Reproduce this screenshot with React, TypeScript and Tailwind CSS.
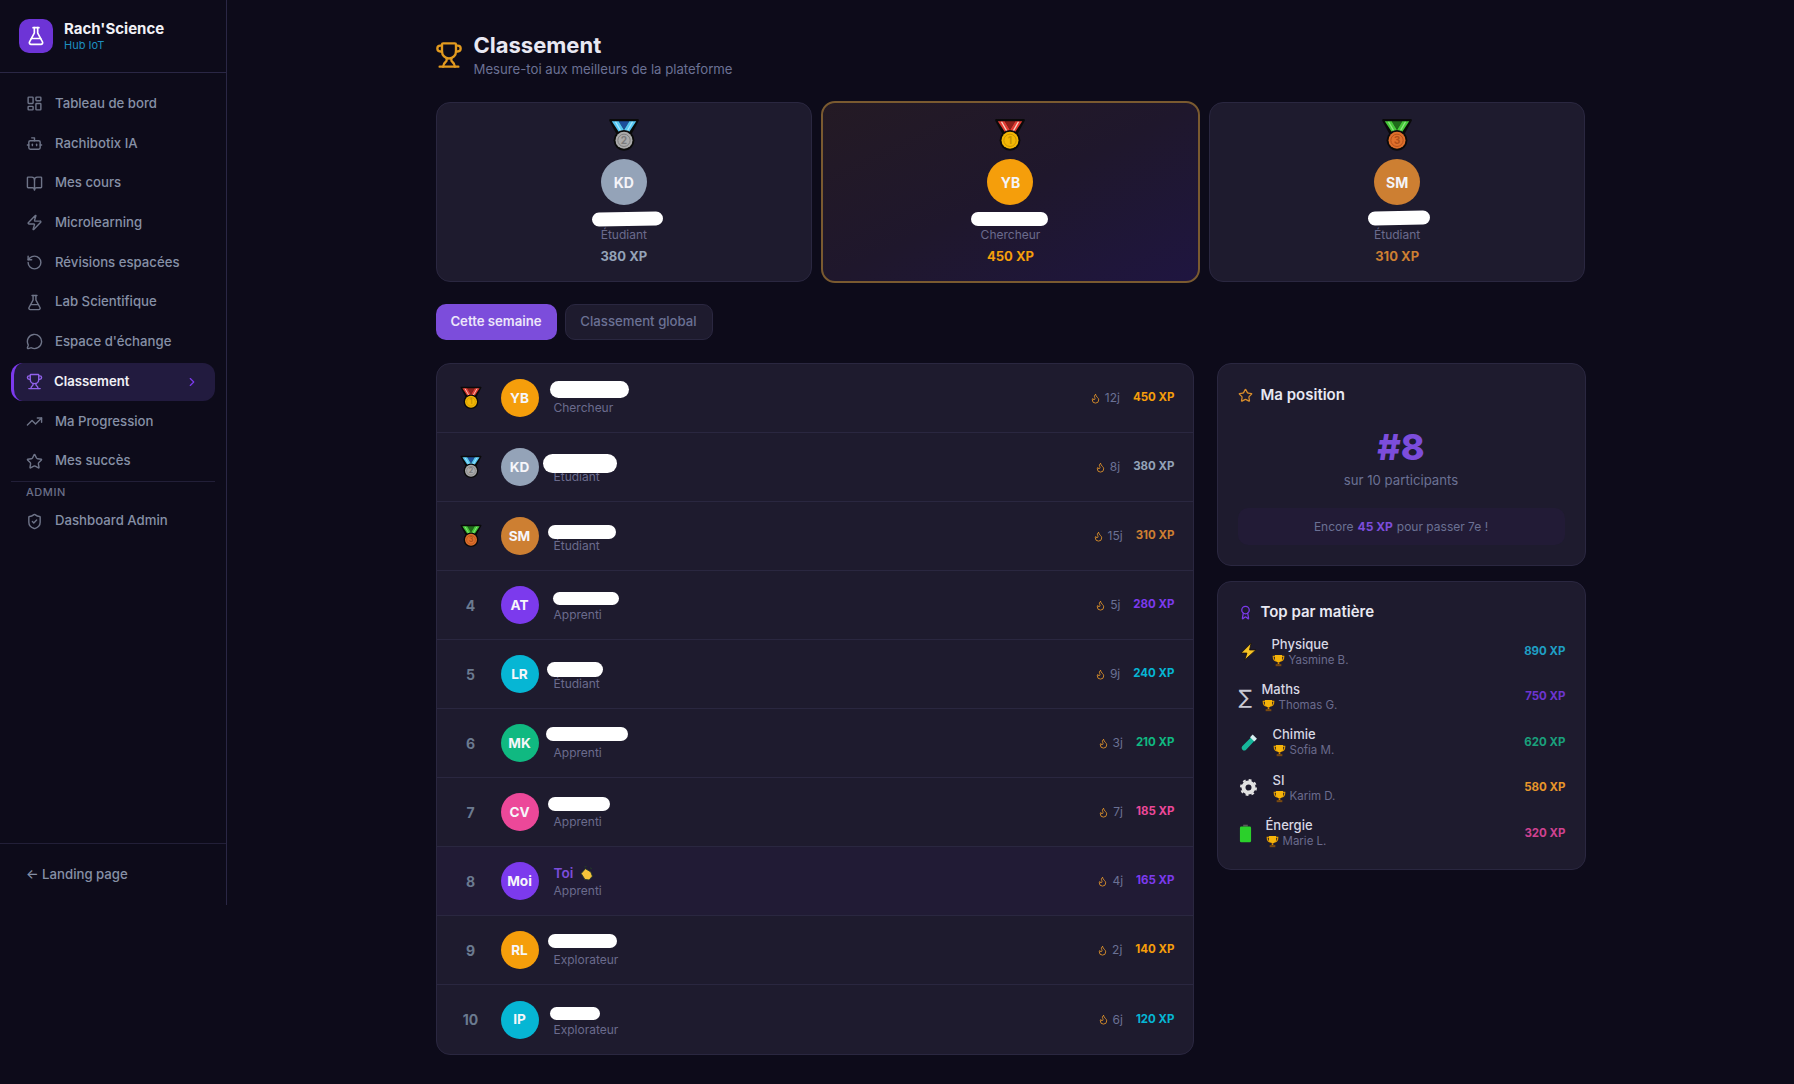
import {
  Award,
  BookOpen,
  Bot,
  ChevronRight,
  Flame,
  FlaskConical,
  LayoutDashboard,
  MessageCircle,
  RotateCcw,
  ShieldCheck,
  Star,
  TrendingUp,
  Trophy,
  Zap,
} from "lucide-react";

const navItems = [
  { label: "Tableau de bord", icon: LayoutDashboard },
  { label: "Rachibotix IA", icon: Bot },
  { label: "Mes cours", icon: BookOpen },
  { label: "Microlearning", icon: Zap },
  { label: "Révisions espacées", icon: RotateCcw },
  { label: "Lab Scientifique", icon: FlaskConical },
  { label: "Espace d'échange", icon: MessageCircle },
  { label: "Classement", icon: Trophy, active: true },
  { label: "Ma Progression", icon: TrendingUp },
  { label: "Mes succès", icon: Star },
];

// white marks hide the names in the reference
const rows = [
  { rank: 1, initials: "YB", role: "Chercheur", streak: "12j", xp: "450 XP", avatar: "bg-[#f59e0b]", color: "text-[#f59e0b]", mark: "left-[113px] top-[17px] w-[79px] h-[17px]" },
  { rank: 2, initials: "KD", role: "Étudiant", streak: "8j", xp: "380 XP", avatar: "bg-[#94a3b8]", color: "text-[#94a3b8]", mark: "left-[106px] top-[21px] w-[74px] h-[19px]" },
  { rank: 3, initials: "SM", role: "Étudiant", streak: "15j", xp: "310 XP", avatar: "bg-[#cd7f32]", color: "text-[#cd7f32]", mark: "left-[111px] top-[23px] w-[68px] h-[14px]" },
  { rank: 4, initials: "AT", role: "Apprenti", streak: "5j", xp: "280 XP", avatar: "bg-[#7c3aed]", color: "text-[#7c3aed]", mark: "left-[116px] top-[21px] w-[66px] h-[13px]" },
  { rank: 5, initials: "LR", role: "Étudiant", streak: "9j", xp: "240 XP", avatar: "bg-[#06b6d4]", color: "text-[#06b6d4]", mark: "left-[110px] top-[22px] w-[56px] h-[15px]" },
  { rank: 6, initials: "MK", role: "Apprenti", streak: "3j", xp: "210 XP", avatar: "bg-[#10b981]", color: "text-[#10b981]", mark: "left-[109px] top-[18px] w-[82px] h-[14px]" },
  { rank: 7, initials: "CV", role: "Apprenti", streak: "7j", xp: "185 XP", avatar: "bg-[#ec4899]", color: "text-[#ec4899]", mark: "left-[111px] top-[19px] w-[62px] h-[14px]" },
  { rank: 8, initials: "Moi", role: "Apprenti", streak: "4j", xp: "165 XP", avatar: "bg-[#7c3aed]", color: "text-[#7c3aed]", me: true },
  { rank: 9, initials: "RL", role: "Explorateur", streak: "2j", xp: "140 XP", avatar: "bg-[#f59e0b]", color: "text-[#f59e0b]", mark: "left-[111px] top-[18px] w-[69px] h-[14px]" },
  { rank: 10, initials: "IP", role: "Explorateur", streak: "6j", xp: "120 XP", avatar: "bg-[#06b6d4]", color: "text-[#06b6d4]", mark: "left-[113px] top-[22px] w-[50px] h-[13px]" },
];

const subjects = [
  { name: "Physique", who: "Yasmine B.", xp: "890 XP", color: "text-[#1f9fc4]", icon: "bolt", gap: "w-[34px]" },
  { name: "Maths", who: "Thomas G.", xp: "750 XP", color: "text-[#6d35d0]", icon: "sigma", gap: "w-[24px]" },
  { name: "Chimie", who: "Sofia M.", xp: "620 XP", color: "text-[#1aa07c]", icon: "tube", gap: "w-[35px]" },
  { name: "SI", who: "Karim D.", xp: "580 XP", color: "text-[#e8962a]", icon: "gear", gap: "w-[35px]" },
  { name: "Énergie", who: "Marie L.", xp: "320 XP", color: "text-[#cf4290]", icon: "battery", gap: "w-[28px]" },
];

function Medal({ rank, className }: { rank: number; className: string }) {
  const ribbon = rank === 1 ? "#e23b33" : rank === 2 ? "#56c7f2" : "#46c93a";
  const stripe = rank === 1 ? "#f6d3c4" : rank === 2 ? "#a6e6fb" : "#8ce67f";
  const inner = rank === 1 ? "#8c1f1a" : rank === 2 ? "#1c4f9c" : "#1f6b1a";
  const disc = rank === 1 ? "#f2b705" : rank === 2 ? "#ababab" : "#e0702c";
  const mark = rank === 1 ? "#c99400" : rank === 2 ? "#7c7c7c" : "#b0501a";
  return (
    <svg viewBox="0 0 32 32" className={className}>
      <path d="M3 2h26l-8 15H11z" fill="#0a0a0a" stroke="#0a0a0a" strokeWidth="2" strokeLinejoin="round" />
      <path d="M11 3h10l-5 8z" fill={inner} />
      <path d="M4.500 3H11l6 10-4 3z" fill={ribbon} />
      <path d="M27.500 3H21l-6 10 4 3z" fill={ribbon} />
      <path d="M8 3.500 14 14M24 3.500 18 14" stroke={stripe} strokeWidth="1.200" />
      <circle cx="16" cy="21" r="9.800" fill="#0a0a0a" />
      <circle cx="16" cy="21" r="8" fill={disc} />
      <circle cx="16" cy="21" r="5.800" fill="none" stroke={mark} strokeWidth="0.900" />
      <text x="16" y="24.400" textAnchor="middle" fontSize="9.500" fontWeight="700" fill={mark} fontFamily="Inter, sans-serif">
        {rank}
      </text>
    </svg>
  );
}

function CupEmoji() {
  return (
    <svg viewBox="0 0 16 16" className="w-[13px] h-[13px] shrink-0">
      <path d="M3.500 3H1.500c0 3 1 5 3.500 5.500M12.500 3h2c0 3-1 5-3.500 5.500" fill="none" stroke="#e09a00" strokeWidth="1.400" />
      <path d="M3.500 1.200h9v4.500c0 2.600-1.800 4.300-4.500 4.300S3.500 8.300 3.500 5.700z" fill="#f5b30a" />
      <path d="M7 10h2v2.500H7z" fill="#d68b00" />
      <path d="M4.500 12.500h7V15h-7z" fill="#7a4a10" />
    </svg>
  );
}

function SubjectIcon({ icon }: { icon: string }) {
  if (icon === "sigma") {
    return <span className="text-[20px] leading-none text-[#c9c9d4] font-['DejaVu_Sans',sans-serif]">∑</span>;
  }
  if (icon === "bolt") {
    return (
      <svg viewBox="0 0 18 18" className="w-[19px] h-[19px]">
        <path d="M11.500 1 2 10.500h5.500L5.500 17 16 7.500h-6z" fill="#f7c325" stroke="#1a1208" strokeWidth="0.800" strokeLinejoin="round" />
      </svg>
    );
  }
  if (icon === "tube") {
    return (
      <svg viewBox="0 0 18 18" className="w-[19px] h-[19px]">
        <path d="M13 2.500 3 12.500a2.500 2.500 0 0 0 3.500 3.500L16 6z" fill="#17b59a" />
        <path d="M13 1.500 17 5.500 14.500 8 10.500 4z" fill="#d7eef0" />
      </svg>
    );
  }
  if (icon === "gear") {
    return (
      <svg viewBox="0 0 18 18" className="w-[17px] h-[17px] ml-[1px]">
        <circle cx="9" cy="9" r="5.300" fill="none" stroke="#e2e2e2" strokeWidth="4.200" />
        <circle cx="9" cy="9" r="8" fill="none" stroke="#e2e2e2" strokeWidth="2" strokeDasharray="3 3.280" />
      </svg>
    );
  }
  return (
    <svg viewBox="0 0 14 20" className="w-[13px] h-[19px]">
      <path d="M4.500 0.500h5v2h-5z" fill="#5a5a5a" />
      <rect x="1" y="2.500" width="12" height="17" rx="1.500" fill="#2bd02b" />
    </svg>
  );
}

function Podium({
  rank,
  initials,
  role,
  xp,
  avatar,
  color,
  mark,
  top,
}: {
  rank: number;
  initials: string;
  role: string;
  xp: string;
  avatar: string;
  color: string;
  mark: string;
  top?: boolean;
}) {
  return (
    <div
      className={
        top
          ? "relative flex flex-col items-center h-[182px] -m-[1px] pt-[15px] rounded-[14px] border-2 border-[#7a5a30] bg-linear-to-br from-[#241a24] via-[#1f172c] to-[#1f1540]"
          : "relative flex flex-col items-center h-[180px] pt-[15px] rounded-[14px] border border-[#2a2740] bg-[#1e1b2e]"
      }
    >
      <Medal rank={rank} className="w-[34px] h-[34px]" />
      <div className={`mt-[7px] w-[46px] h-[46px] rounded-full flex items-center justify-center text-[14px] font-bold text-[#f4f4f8] ${avatar}`}>
        {initials}
      </div>
      <div className="h-[21px]" />
      <div className="text-[12px] leading-[18px] text-[#6b6b8d]">{role}</div>
      <div className={`mt-[2px] text-[13px] leading-[20px] font-bold ${color}`}>{xp}</div>
      <div className={`absolute bg-white rounded-full ${mark}`} />
    </div>
  );
}

export default function App() {
  return (
    <div className="min-h-[1084px] flex items-start bg-[#0d0b1a] font-['Inter',sans-serif]">
      {/* Sidebar */}
      <aside className="w-[227px] h-[905px] shrink-0 flex flex-col border-r border-[#2a2745]">
        <div className="h-[73px] flex items-center gap-[11px] pl-[19px] border-b border-[#2a2745]">
          <div className="w-[34px] h-[34px] rounded-[10px] bg-[#6d34d6] flex items-center justify-center">
            <FlaskConical className="w-[20px] h-[20px] text-white" strokeWidth={2} />
          </div>
          <div>
            <div className="text-[15px] leading-[18px] font-bold text-[#f1f1f6]">Rach'Science</div>
            <div className="text-[11px] leading-[14px] text-[#1d8fc0]">Hub IoT</div>
          </div>
        </div>

        <nav className="flex-1 pt-[12px] px-[11px]">
          <div className="flex flex-col gap-[2px]">
            {navItems.map((item) => {
              const Icon = item.icon;
              return item.active ? (
                <div
                  key={item.label}
                  className="h-[38px] flex items-center gap-[11px] pl-[12px] pr-[16px] rounded-[12px] border-l-[3px] border-[#7c3aed] bg-[#221b3f] text-[13.2px] font-semibold text-[#f1f1f6]"
                >
                  <Icon className="w-[17px] h-[17px] text-[#9061ea]" />
                  <span className="flex-1">{item.label}</span>
                  <ChevronRight className="w-[14px] h-[14px] text-[#7c3aed]" />
                </div>
              ) : (
                <div key={item.label} className="h-[37.7px] flex items-center gap-[12px] pl-[15px] text-[13.2px] font-medium text-[#8690a6]">
                  <Icon className="w-[17px] h-[17px] text-[#6e7488]" />
                  <span>{item.label}</span>
                </div>
              );
            })}
          </div>
          <div className="mt-[1px] border-t border-[#221f38] pl-[15px] pt-[3px] text-[11px] leading-[15px] font-medium tracking-[0.05em] text-[#6b6f88]">
            ADMIN
          </div>
          <div className="mt-[2px] h-[37.7px] flex items-center gap-[12px] pl-[15px] text-[13.2px] font-medium text-[#8690a6]">
            <ShieldCheck className="w-[17px] h-[17px] text-[#6e7488]" />
            <span>Dashboard Admin</span>
          </div>
        </nav>

        <div className="h-[62px] flex items-center pl-[26px] border-t border-[#221f38] text-[13.2px] font-medium text-[#8690a6]">
          ← Landing page
        </div>
      </aside>

      {/* Main */}
      <main className="flex-1 pt-[31px] pb-[30px]">
        <div className="w-[1150px] mx-auto">
          <div className="flex items-center gap-[11px] h-[48px] mb-[23px]">
            <Trophy className="w-[28px] h-[28px] -ml-[1px] text-[#e29a1f]" />
            <div>
              <h1 className="text-[22px] leading-[28px] font-bold text-[#e8e8f2]">Classement</h1>
              <p className="text-[13.2px] leading-[20px] text-[#6b7194]">Mesure-toi aux meilleurs de la plateforme</p>
            </div>
          </div>

          <div className="grid grid-cols-3 gap-[10px]">
            <Podium rank={2} initials="KD" role="Étudiant" xp="380 XP" avatar="bg-[#94a3b8]" color="text-[#94a3b8]" mark="left-[155px] top-[109px] w-[71px] h-[14px] -rotate-1" />
            <Podium rank={1} initials="YB" role="Chercheur" xp="450 XP" avatar="bg-[#f59e0b]" color="text-[#f59e0b]" mark="left-[148px] top-[109px] w-[77px] h-[14px]" top />
            <Podium rank={3} initials="SM" role="Étudiant" xp="310 XP" avatar="bg-[#cd7f32]" color="text-[#cd7f32]" mark="left-[158px] top-[108px] w-[62px] h-[14px] -rotate-1" />
          </div>

          <div className="flex gap-[8px] mt-[22px] mb-[23px]">
            <div className="h-[36px] w-[121px] flex items-center justify-center rounded-[10px] bg-[#7c4ddb] text-[13.2px] font-semibold text-[#ece6fa]">
              Cette semaine
            </div>
            <div className="h-[36px] w-[148px] flex items-center justify-center rounded-[10px] border border-[#2a2740] bg-[#1e1b2e] text-[13.2px] font-medium text-[#6b7194]">
              Classement global
            </div>
          </div>

          <div className="grid grid-cols-[758px_369px] gap-[23px] items-start">
            <div className="rounded-[14px] border border-[#2a2740] bg-[#1e1b2e] overflow-hidden">
              {rows.map((row) => (
                <div
                  key={row.rank}
                  className={`relative h-[69px] flex items-center pl-[20px] pr-[18px] border-b border-[#2a2740] last:border-b-0 ${row.me ? "bg-[#211b35]" : ""}`}
                >
                  <div className="w-[28px] flex justify-center text-[14px] font-bold text-[#6b7a90]">
                    {row.rank <= 3 ? <Medal rank={row.rank} className="w-[24px] h-[24px]" /> : row.rank}
                  </div>
                  <div className={`ml-[16px] w-[38px] h-[38px] rounded-full flex items-center justify-center text-[13.6px] font-bold text-[#f6f6fa] ${row.avatar}`}>
                    {row.initials}
                  </div>
                  <div className="ml-[15px] flex-1">
                    <div className="h-[20px] flex items-center gap-[6px] text-[13.6px] font-semibold text-[#7c4ddb]">
                      {row.me && (
                        <>
                          <span>Toi</span>
                          <svg viewBox="0 0 14 14" className="w-[15px] h-[15px]">
                            <path d="M2 7 6 2.500l5 3 1.500 4-3 3.500-4-.5z" fill="#f5c33b" stroke="#22382a" strokeWidth="0.800" />
                            <path d="M5 1 7 .5M10.500 1.500l1.500 1.500" stroke="#22382a" strokeWidth="1" />
                          </svg>
                        </>
                      )}
                    </div>
                    <div className="text-[12px] leading-[16px] text-[#6b6b8d]">{row.role}</div>
                  </div>
                  <div className="flex items-center gap-[4px] text-[12px] text-[#6b7194]">
                    <Flame className="w-[11px] h-[11px] text-[#d98e2b]" />
                    <span>{row.streak}</span>
                  </div>
                  <div className={`ml-[13px] text-[11.5px] font-bold ${row.color}`}>{row.xp}</div>
                  {row.mark && <div className={`absolute bg-white rounded-full ${row.mark}`} />}
                </div>
              ))}
            </div>

            <div className="flex flex-col gap-[15px]">
              <div className="h-[203px] rounded-[14px] border border-[#2a2740] bg-[#1e1b2e] pt-[21px] px-[20px]">
                <div className="flex items-center gap-[8px] text-[15px] leading-[20px] font-semibold text-[#e8e8f2]">
                  <Star className="w-[15px] h-[15px] text-[#d98e2b]" />
                  Ma position
                </div>
                <div className="mt-[20px] text-center text-[36px] leading-[44px] font-extrabold text-[#7c4ddb]">#8</div>
                <div className="mt-[1px] text-center text-[13.2px] leading-[20px] text-[#6b7194]">sur 10 participants</div>
                <div className="mt-[18px] h-[37px] flex items-center justify-center gap-[4px] rounded-[10px] bg-[#221b36] text-[12px] text-[#6b7194]">
                  Encore <span className="font-bold text-[#7c4ddb]">45 XP</span> pour passer 7e !
                </div>
              </div>

              <div className="h-[289px] rounded-[14px] border border-[#2a2740] bg-[#1e1b2e] pt-[20px] pl-[20px] pr-[19px]">
                <div className="flex items-center gap-[8px] text-[15px] leading-[20px] font-semibold text-[#e8e8f2]">
                  <Award className="w-[15px] h-[15px] text-[#7c3aed]" />
                  Top par matière
                </div>
                <div className="mt-[7px] flex flex-col">
                  {subjects.map((s) => (
                    <div key={s.name} className="h-[45.4px] flex items-center">
                      <div className={`${s.gap} shrink-0 flex pl-[1px]`}>
                        <SubjectIcon icon={s.icon} />
                      </div>
                      <div className="flex-1">
                        <div className="text-[13px] leading-[17px] font-medium text-[#d8d8e4]">{s.name}</div>
                        <div className="flex items-center gap-[4px] text-[11.5px] leading-[15px] text-[#6b6b8d]">
                          <CupEmoji />
                          {s.who}
                        </div>
                      </div>
                      <div className={`text-[11.5px] font-bold ${s.color}`}>{s.xp}</div>
                    </div>
                  ))}
                </div>
              </div>
            </div>
          </div>
        </div>
      </main>
    </div>
  );
}
